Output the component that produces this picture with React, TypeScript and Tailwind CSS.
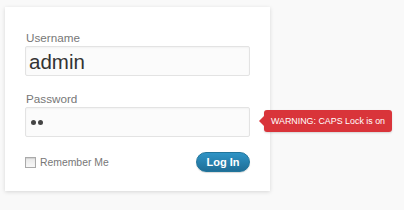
import React from "react";

export default function App() {
  return (
    <div className="w-[404px] h-[210px] bg-[#f9f9f9] pt-[7px] pl-[5px] overflow-hidden" style={{ fontFamily: '"Liberation Sans", Arial, sans-serif' }}>
      <div className="w-[265px] h-[184px] bg-white shadow-[0_1px_4px_rgba(0,0,0,0.14)] px-[20px] pt-[23px]">
        <div className="text-[11.7px] leading-[16px] text-[#777] pl-[1px]">Username</div>
        <div className="h-[30px] border border-[#e3e3e3] bg-[#fbfbfb] rounded-[2px] flex items-center pl-[3px] shadow-[inset_0_1px_2px_rgba(0,0,0,0.04)]">
          <span className="text-[20.5px] leading-[23px] text-[#333]">admin</span>
        </div>
        <div className="mt-[15px] text-[11.7px] leading-[16px] text-[#777] pl-[1px]">Password</div>
        <div className="relative">
          <div className="h-[30px] border border-[#e3e3e3] bg-[#fbfbfb] rounded-[2px] flex items-center pl-[5px] gap-[2px] shadow-[inset_0_1px_2px_rgba(0,0,0,0.04)]">
            <span className="w-[5px] h-[5px] rounded-full bg-[#444]"></span>
            <span className="w-[5px] h-[5px] rounded-full bg-[#444]"></span>
          </div>
          <div className="absolute left-[239px] top-[3px] h-[22px] w-[128px] bg-[#d9343a] rounded-[3px] flex items-center justify-center shadow-[0_1px_2px_rgba(0,0,0,0.15)]">
            <span className="absolute left-[-5px] top-[5px] w-0 h-0 border-y-[6px] border-y-transparent border-r-[6px] border-r-[#d9343a]"></span>
            <span className="text-[8.9px] leading-[12px] text-white whitespace-nowrap">WARNING: CAPS Lock is on</span>
          </div>
        </div>
        <div className="mt-[15px] flex items-center justify-between">
          <div className="flex items-center">
            <span className="w-[11px] h-[11px] border border-[#aaa] bg-gradient-to-b from-[#e8e8e8] to-[#f8f8f8] shadow-[inset_0_1px_1px_rgba(0,0,0,0.1)]"></span>
            <span className="ml-[4px] text-[10.4px] leading-[13px] text-[#777]">Remember Me</span>
          </div>
          <div className="w-[54px] h-[20px] rounded-full bg-gradient-to-b from-[#2f94c6] to-[#1f6e97] border border-[#21759b] flex items-center justify-center shadow-[0_1px_1px_rgba(0,0,0,0.15)]">
            <span className="text-[11px] leading-[13px] font-bold text-white">Log In</span>
          </div>
        </div>
      </div>
    </div>
  );
}
